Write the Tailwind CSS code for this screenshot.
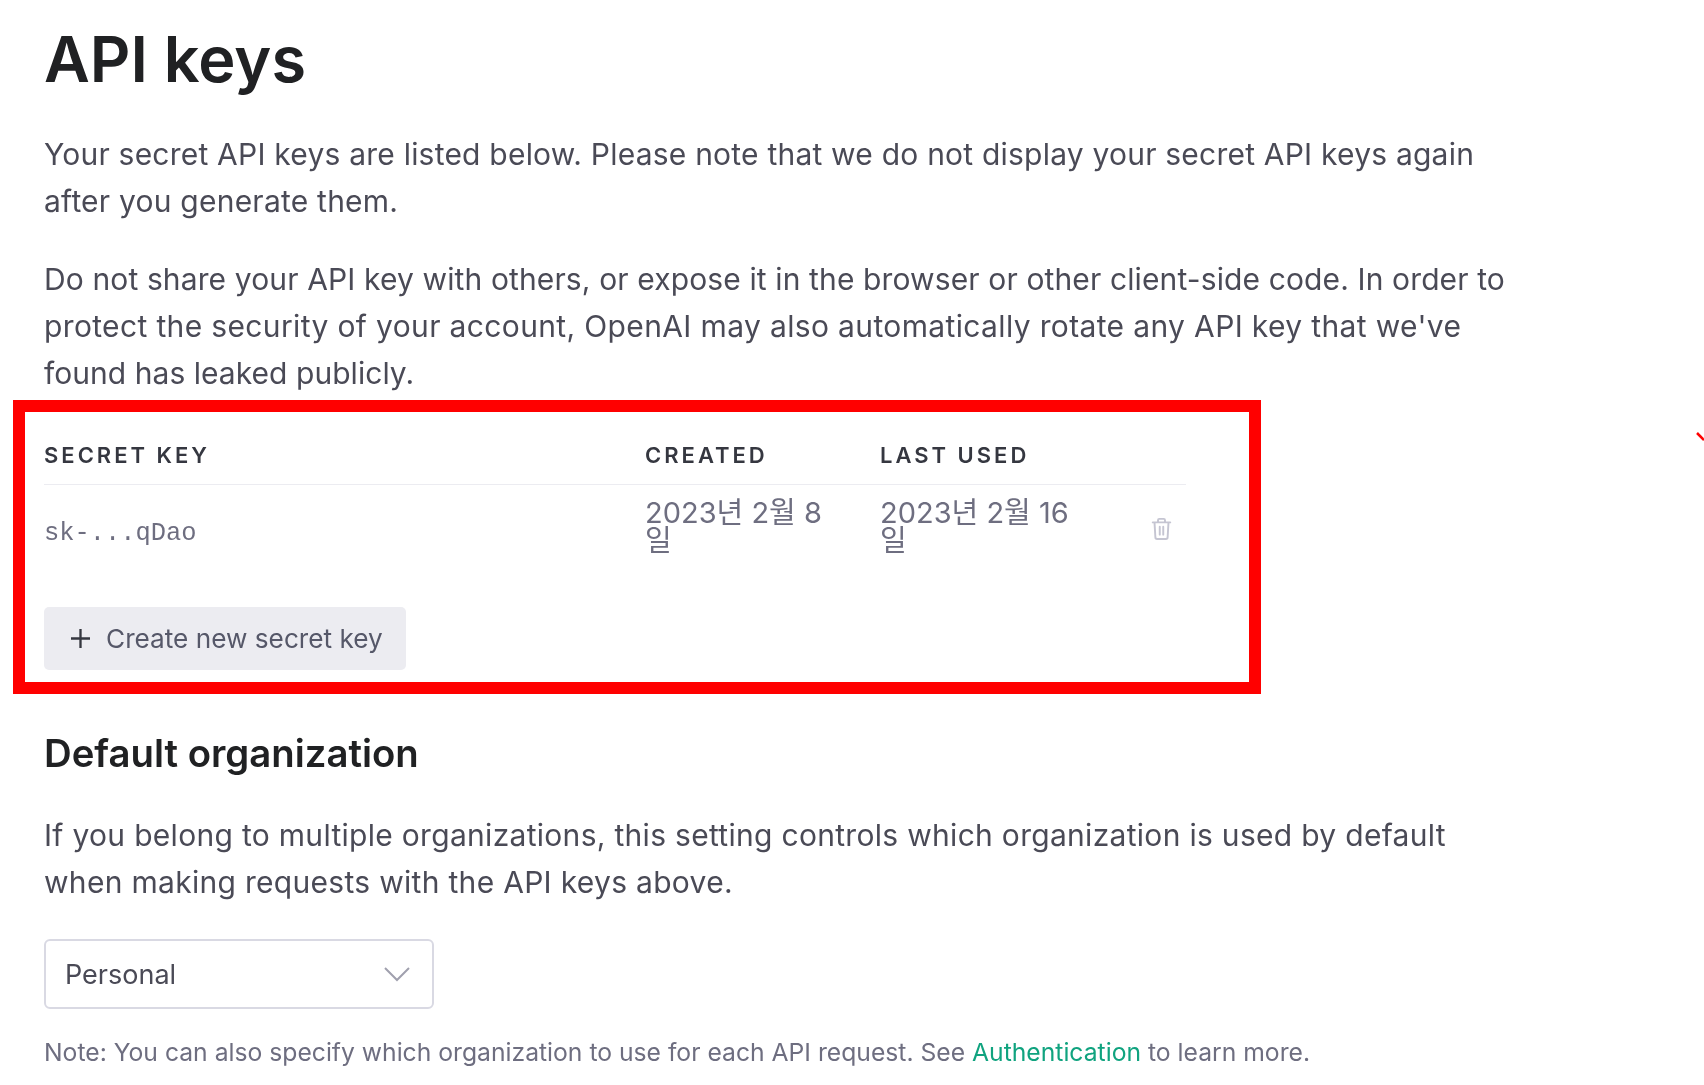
<!DOCTYPE html>
<html lang="ko">
<head>
<meta charset="utf-8">
<script src="https://cdn.jsdelivr.net/npm/@tailwindcss/browser@4"></script>
</head>
<body class="bg-white">
<main class="relative w-[1704px] h-[1085px] overflow-hidden bg-white pl-[44px] font-['Inter','Noto_Sans_CJK_KR',sans-serif] text-[30px] leading-[47px] text-[#4a4a56] blur-[0.4px]">
  <h1 class="pt-[20px] text-[63px] leading-[78px] font-semibold text-[#202123]">API keys</h1>
  <p class="mt-[33px] w-[1480px]"><span class="block tracking-[0.215px]">Your secret API keys are listed below. Please note that we do not display your secret API keys again</span><span class="block tracking-[0.226px]">after you generate them.</span></p>
  <p class="mt-[31px] w-[1480px]"><span class="block tracking-[0.124px]">Do not share your API key with others, or expose it in the browser or other client-side code. In order to</span><span class="block tracking-[0.358px]">protect the security of your account, OpenAI may also automatically rotate any API key that we've</span><span class="block tracking-[0.04px]">found has leaked publicly.</span></p>

  <section class="mt-[38px] w-[1142px]">
    <div class="grid grid-cols-[601px_235px_1fr] h-[50px] items-center border-b border-[#ececf1] text-[22px] leading-[30px] font-semibold tracking-[3px] text-[#353740] pb-[9px]">
      <span>SECRET KEY</span><span>CREATED</span><span>LAST USED</span>
    </div>
    <div class="grid grid-cols-[601px_235px_235px_1fr] h-[90px] items-center text-[#6e6e80]">
      <span class="font-['Liberation_Mono',monospace] text-[25.4px] leading-[30px] pt-[8px]">sk-...qDao</span>
      <span class="text-[29px] leading-[28px] pb-[6px]">2023년 2월 8<br>일</span>
      <span class="text-[29px] leading-[28px] pb-[6px]">2023년 2월 16<br>일</span>
      <svg class="w-[21px] h-[23px] ml-[36px] -mt-[3px] text-[#c5c5d2]" viewBox="0 0 24 26" fill="none" stroke="currentColor" stroke-width="2.200" stroke-linecap="round" stroke-linejoin="round" aria-hidden="true"><path d="M2 6h20M8 6V3.500A1.500 1.500 0 0 1 9.500 2h5A1.500 1.500 0 0 1 16 3.500V6M4 6l1 17a2 2 0 0 0 2 2h10a2 2 0 0 0 2-2l1-17M10 11v9M14 11v9"/></svg>
    </div>
    <button class="mt-[32px] flex items-center h-[63px] w-[362px] rounded-[5px] bg-[#ececf1] pl-[27px] text-[26.2px] text-[#565869]">
      <svg class="w-[19px] h-[19px] mr-[16px] text-[#353740]" viewBox="0 0 18 18" fill="none" stroke="currentColor" stroke-width="2.200"><path d="M9 0v18M0 9h18"/></svg>
      <span class="-mt-[1px]">Create new secret key</span>
    </button>
  </section>

  <h2 class="mt-[60px] text-[38.3px] leading-[46px] font-semibold text-[#202123]">Default organization</h2>
  <p class="mt-[36px] w-[1480px] tracking-[0.3px]">If you belong to multiple organizations, this setting controls which organization is used by default<br>when making requests with the API keys above.</p>
  <div class="mt-[33px] flex items-center justify-between w-[390px] h-[70px] rounded-[6px] border-2 border-[#d9d9e3] pl-[19px] pr-[22px] text-[#4a4a56] text-[27px]">
    <span>Personal</span>
    <svg class="w-[26px] h-[16px] text-[#a0a0ae]" viewBox="0 0 26 16" fill="none" stroke="currentColor" stroke-width="2"><path d="M1 2l12 12L25 2"/></svg>
  </div>
  <p class="mt-[23px] text-[24.7px] leading-[40px] text-[#6e6e80]">Note: You can also specify which organization to use for each API request. See <span class="text-[#10a37f]">Authentication</span> to learn more.</p>

  <div class="absolute left-[13px] top-[400px] w-[1248px] h-[294px] border-[12px] border-[#ff0000]"></div>
  <svg class="absolute left-[1696px] top-[431px] w-[8px] h-[10px]" viewBox="0 0 8 10" aria-hidden="true"><path d="M1 2l7 7" stroke="#ff0000" stroke-width="2.500"/></svg>
</main>
</body>
</html>
